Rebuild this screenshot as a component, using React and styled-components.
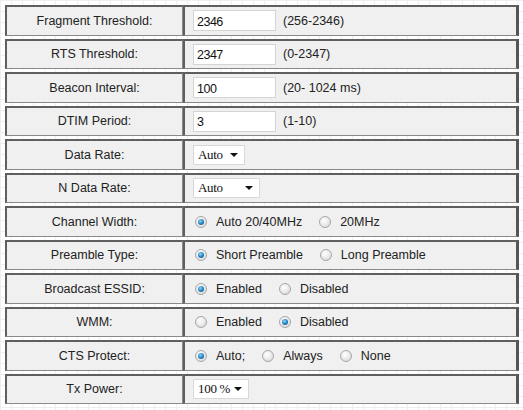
import styled, { createGlobalStyle } from 'styled-components'

const Global = createGlobalStyle`
body {
  margin: 0;
  font-family: "Liberation Sans", Arial, sans-serif;
  background-color: #fff;
  background-image:
    linear-gradient(to right, #efefef 1px, transparent 1px),
    linear-gradient(to bottom, #efefef 1px, transparent 1px);
  background-size: 11px 11px;
}
`

const Page = styled.div`
padding: 5px 4px 0 5px;
`

const Table = styled.table`
border-collapse: separate;
border-spacing: 0 3px;
margin-top: -3px;
width: 514px;
`

const LabelCell = styled.td`
width: 175px;
height: 27.5px;
padding: 0;
text-align: center;
font-size: 12.5px;
color: #222;
background: #f0f0f0;
border-style: solid;
border-width: 2px 1px 1px 2px;
border-color: #5f5f5f #8a8a8a #8a8a8a #5f5f5f;
`

const ValueCell = styled.td`
padding: 0 0 0 8px;
font-size: 12.5px;
color: #222;
background: #f0f0f0;
border-style: solid;
border-width: 2px 3px 1px 2px;
border-color: #5f5f5f #555 #8a8a8a #5f5f5f;
`

const Line = styled.div`
display: flex;
align-items: center;
`

const TextBox = styled.input`
width: 83px;
height: 21px;
box-sizing: border-box;
border: 1px solid #d4d4d4;
background: #fff;
padding: 2px 3px 0;
font-family: "Liberation Sans", Arial, sans-serif;
font-size: 12.5px;
letter-spacing: -0.5px;
color: #111;
outline: none;
`

const Hint = styled.span`
margin-left: 7px;
`

const Select = styled.div`
display: flex;
align-items: center;
justify-content: space-between;
gap: 4px;
white-space: nowrap;
width: ${({ $w }) => $w}px;
height: 20px;
box-sizing: border-box;
border: 1px solid #d8d8d8;
background: #fff;
padding: 0 6px 0 4px;
font-family: "Liberation Serif", "Times New Roman", serif;
font-size: 13px;
letter-spacing: -0.3px;
color: #111;
`

const Arrow = styled.span`
flex: none;
width: 0;
height: 0;
border-left: 4px solid transparent;
border-right: 4px solid transparent;
border-top: 4px solid #111;
`

const Radio = styled.span`
display: inline-block;
box-sizing: border-box;
width: 12px;
height: 12px;
border-radius: 50%;
border: 1px solid #a7a7a7;
background: radial-gradient(circle at 40% 35%, #fff 0%, #e6e6e6 60%, #cfcfcf 100%);
position: relative;
margin: 0 9px 0 2px;
&::after {
  content: '';
  display: ${({ $on }) => ($on ? 'block' : 'none')};
  position: absolute;
  left: 2px;
  top: 2px;
  width: 6px;
  height: 6px;
  border-radius: 50%;
  background: radial-gradient(circle at 40% 35%, #8ed3f5 0%, #1f7fc0 55%, #0b4a7a 100%);
}
`

const Option = styled.span`
display: inline-flex;
align-items: center;
margin-right: 15px;
`

const rows = [
  { label: 'Fragment Threshold:', input: '2346', hint: '(256-2346)' },
  { label: 'RTS Threshold:', input: '2347', hint: '(0-2347)' },
  { label: 'Beacon Interval:', input: '100', hint: '(20- 1024 ms)' },
  { label: 'DTIM Period:', input: '3', hint: '(1-10)' },
  { label: 'Data Rate:', select: 'Auto', w: 52 },
  { label: 'N Data Rate:', select: 'Auto', w: 67 },
  { label: 'Channel Width:', radios: [['Auto 20/40MHz', true], ['20MHz', false]] },
  { label: 'Preamble Type:', radios: [['Short Preamble', true], ['Long Preamble', false]] },
  { label: 'Broadcast ESSID:', radios: [['Enabled', true], ['Disabled', false]] },
  { label: 'WMM:', radios: [['Enabled', false], ['Disabled', true]] },
  { label: 'CTS Protect:', radios: [['Auto;', true], ['Always', false], ['None', false]] },
  { label: 'Tx Power:', select: '100 %', w: 56 },
]

function Value({ row }) {
  if (row.input) {
    return (
      <Line>
        <TextBox defaultValue={row.input} />
        <Hint>{row.hint}</Hint>
      </Line>
    )
  }
  if (row.select) {
    return (
      <Line>
        <Select $w={row.w}>{row.select}<Arrow /></Select>
      </Line>
    )
  }
  return (
    <Line>
      {row.radios.map(([text, on]) => (
        <Option key={text}><Radio $on={on} />{text}</Option>
      ))}
    </Line>
  )
}

export default function App() {
  return (
    <>
      <Global />
      <Page>
        <Table>
          <tbody>
            {rows.map(row => (
              <tr key={row.label}>
                <LabelCell>{row.label}</LabelCell>
                <ValueCell><Value row={row} /></ValueCell>
              </tr>
            ))}
          </tbody>
        </Table>
      </Page>
    </>
  )
}
